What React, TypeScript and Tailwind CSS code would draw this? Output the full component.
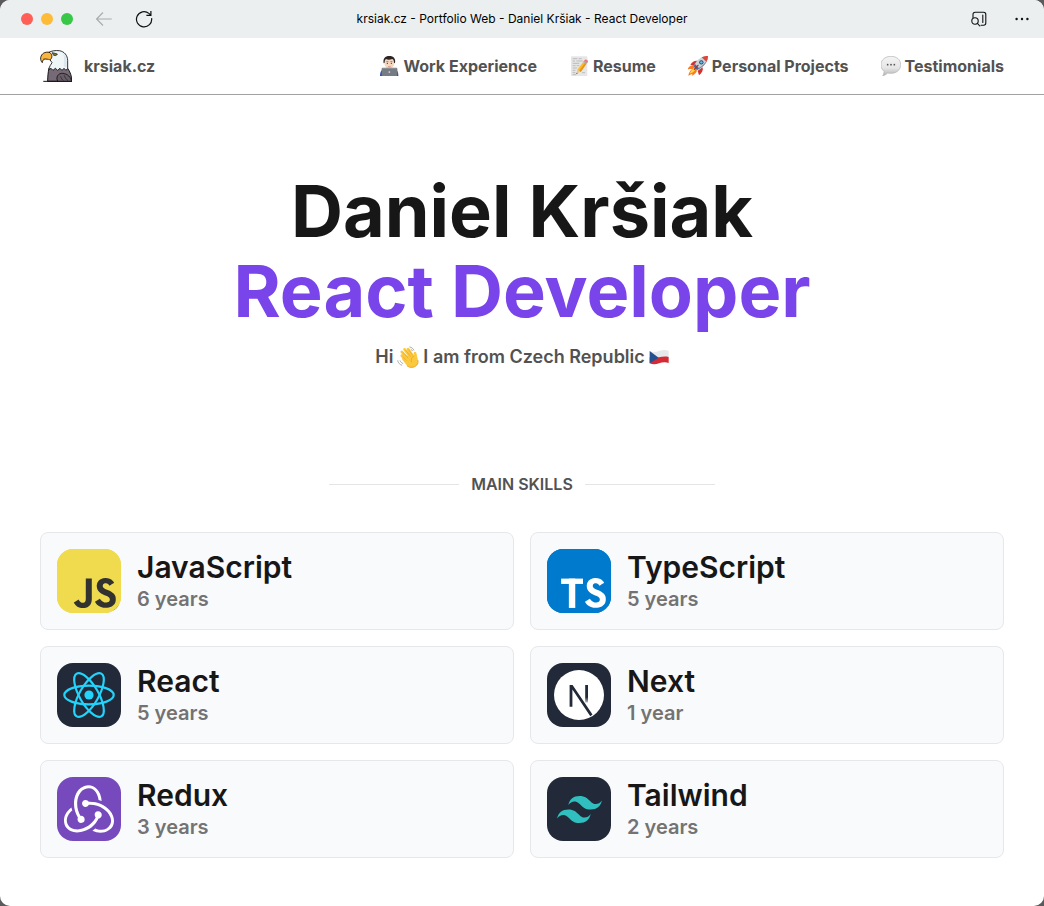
import type { ReactNode } from "react";
import { SiJavascript, SiRedux, SiTailwindcss } from "react-icons/si";

function BackIcon() {
  return (
    <svg width="16" height="16" viewBox="0 0 16 16" fill="none" stroke="#a9abac" strokeWidth="1.1" aria-hidden="true">
      <path d="M15.7 8H.8M7 1.5.6 8 7 14.5" />
    </svg>
  );
}

function ReloadIcon() {
  return (
    <svg width="18" height="18" viewBox="0 0 18 18" fill="none" stroke="#111" strokeWidth="1.2" aria-hidden="true">
      <path d="M16.6 8.2a7.6 7.6 0 1 1-2.7-4.8l1.6 1.5M15.9.9v4.5h-4.5" />
    </svg>
  );
}

function PageSearchIcon() {
  return (
    <svg width="16" height="16" viewBox="0 0 16 16" fill="none" stroke="#111" strokeWidth="1.1" strokeLinecap="round" aria-hidden="true">
      <path d="M2 6.4V3.4C2 2.1 2.9 1.2 4.2 1.2h8.4c1.3 0 2.2.9 2.2 2.2v8.6c0 1.3-.9 2.2-2.2 2.2H10M11.8 4v7.4" />
      <circle cx="4" cy="10" r="3.2" />
      <path d="m6.4 12.4 2.4 2.6" />
    </svg>
  );
}

function MoreIcon() {
  return (
    <svg width="14" height="4" viewBox="0 0 14 4" fill="#111" aria-hidden="true">
      <circle cx="1.6" cy="2" r="1.2" />
      <circle cx="7" cy="2" r="1.2" />
      <circle cx="12.4" cy="2" r="1.2" />
    </svg>
  );
}

function EagleLogo() {
  return (
    <svg width="32" height="32" viewBox="120 150 96 96" strokeLinejoin="round" strokeLinecap="round" aria-hidden="true">
      <path d="M147 205c-3 12-4 25-4 39h72c1-14-4-28-12-39z" fill="#756a75" stroke="#151515" strokeWidth="3" />
      <path
        d="M147 157c8-5 19-6 31-5 16 3 24 14 25 29l0 24-5 6-6-6-6 6-6-6-7 6-7-6-7 6-6-6-6 4c0-10 6-15 9-21l-7-10z"
        fill="#eff6f8"
        stroke="#151515"
        strokeWidth="2.6"
      />
      <path d="M188 159c9 6 11 14 12 25v18l-8-2c-2-14 4-28-4-41z" fill="#dbe7ec" />
      <path
        d="M148 157c-13-3-24 4-26 16-1 7 2 12 5 15 0-7 3-10 9-11l15 2c7-6 6-18-3-22z"
        fill="#f7b63e"
        stroke="#151515"
        strokeWidth="2.6"
      />
      <path d="m132 176 17 3" stroke="#b3691e" strokeWidth="3" fill="none" />
      <path d="m158 158 14 4c-1 5-9 7-13 2z" fill="#7d782b" stroke="#151515" strokeWidth="2" />
      <path d="M173 244c-7-13 2-25 15-24 15 1 25 12 27 24" fill="#675d68" stroke="#151515" strokeWidth="2.6" />
      <path d="M182 230c2 6 4 9 8 12m3-15c2 6 5 11 10 14" stroke="#151515" strokeWidth="1.6" fill="none" />
      <path d="M131 244h84" stroke="#151515" strokeWidth="3" />
    </svg>
  );
}

function TechnologistIcon() {
  return (
    <svg width="20" height="20" viewBox="120 168 60 60" aria-hidden="true">
      <path d="M123 228c0-14 6-21 18-23h20c12 2 17 9 17 23z" fill="#2f4da5" />
      <path d="M141 203h20l-10 12z" fill="#e9ecf2" />
      <path d="M144 196h14v9l-7 6-7-6z" fill="#e2b799" />
      <ellipse cx="151" cy="189" rx="15" ry="17" fill="#f5d7c0" />
      <path d="M134 190c-3-14 4-22 17-22s20 8 17 22l-3-2c0-6-2-9-5-11-7 3-15 3-19 0-3 3-4 6-4 11z" fill="#2d2524" />
      <circle cx="145" cy="190" r="1.8" fill="#3b2a26" />
      <circle cx="157" cy="190" r="1.8" fill="#3b2a26" />
      <path d="M142 185h6m6 0h6" stroke="#4a3430" strokeWidth="1.6" />
      <path d="M147 199c3 2 5 2 8 0" stroke="#b35e52" strokeWidth="1.6" fill="none" />
      <rect x="128" y="203" width="47" height="25" rx="3" fill="#777b83" />
      <rect x="130" y="204" width="43" height="2" rx="1" fill="#94989f" />
      <circle cx="151" cy="216" r="2.6" fill="#dcdfe4" />
    </svg>
  );
}

function MemoIcon() {
  return (
    <svg width="20" height="20" viewBox="690 168 60 60" aria-hidden="true">
      <rect x="696" y="169" width="49" height="59" rx="2" fill="#e6e6e6" />
      <path
        d="M701 176h14m4 0h9m-27 7h7m4 0h19m-30 7h20m-20 7h9m3 0h8m-20 7h13m-13 7h8m-8 7h8m-8 6h10m18-6h9"
        stroke="#b3b3b3"
        strokeWidth="2.5"
      />
      <path d="m712 223 3-14 8 6z" fill="#e9c79a" />
      <path d="m712 223 1-5 3 2z" fill="#333" />
      <path d="m715 209 18-24 9 7-17 24z" fill="#f9bd2b" />
      <path d="m721 212 17-24 4 4-17 24z" fill="#e4941e" />
      <path d="m733 185 2-3 10 6-3 4z" fill="#9ea4ab" />
      <path d="m735 182 3-3c4-1 9 2 9 6l-2 4z" fill="#e9787c" />
    </svg>
  );
}

function RocketIcon() {
  return (
    <svg width="20" height="20" viewBox="54 168 60 60" aria-hidden="true">
      <path d="M71 196c-10-1-17 6-18 13 5-3 9-2 14-2-7 5-11 12-12 20 4-3 8-4 12-6l-1 6c8-4 13-9 15-15z" fill="#fb7a22" />
      <path d="M72 203c-6 5-10 11-13 18 8-3 13-6 17-12z" fill="#ffd646" />
      <path d="M84 183c-9-2-17 2-23 11l13 3z" fill="#d3322f" />
      <path d="M98 202c2 9-2 17-11 24l-4-14z" fill="#d3322f" />
      <path d="M114 168c-18 0-33 9-43 31l10 11c21-8 32-23 33-42z" fill="#c9d1d9" />
      <path d="M114 168c-2 17-15 31-36 39l3 3c21-8 32-23 33-42z" fill="#7e8c9b" />
      <path d="M114 168c-7 0-13 1-19 4l14 13c3-5 5-11 5-17z" fill="#e0453a" />
      <path d="m71 199 4-7 12 13-6 5z" fill="#3d6da5" />
      <circle cx="94" cy="187" r="6.5" fill="#324c6d" />
      <circle cx="94" cy="187" r="3.6" fill="#6bbdec" />
      <path d="m73 208 11-12" stroke="#b22927" strokeWidth="4" strokeLinecap="round" />
    </svg>
  );
}

function SpeechIcon() {
  return (
    <svg width="20" height="20" viewBox="633 168 60 60" aria-hidden="true">
      <defs>
        <linearGradient id="bubble" x1="0" y1="0" x2="0" y2="1">
          <stop offset="0" stopColor="#f4f4f4" />
          <stop offset="0.6" stopColor="#e6e6e6" />
          <stop offset="1" stopColor="#b5b5b5" />
        </linearGradient>
      </defs>
      <path
        d="M663 169c17 0 29 10 29 25s-12 26-29 26c-4 0-7 0-10-1-4 4-9 7-15 8 3-4 4-8 4-13-6-5-9-12-9-20 0-15 13-25 30-25z"
        fill="url(#bubble)"
        stroke="#b2b2b2"
        strokeWidth="2"
      />
      <circle cx="653" cy="194" r="2.6" fill="#555" />
      <circle cx="663" cy="194" r="2.6" fill="#555" />
      <circle cx="673" cy="194" r="2.6" fill="#555" />
    </svg>
  );
}

function WaveIcon() {
  return (
    <svg width="22" height="22" viewBox="110 33 64 64" fill="none" strokeLinecap="round" aria-hidden="true">
      <path d="M147 36c6 1 10 4 12 9m-8-2c2 1 3 2 4 4M112 76c2 7 6 11 12 13m-5-13c2 4 4 6 8 8" stroke="#9b9b9b" strokeWidth="2.4" />
      <path d="M124 61 137 77M124 50l18 20M132 43l17 22M142 42l13 19" stroke="#fbc93d" strokeWidth="8" />
      <path
        d="M130 66 148 58l10 4c1-6-1-11 4-12 5 0 5 6 6 12 3 12 6 20-1 28-8 8-20 8-27 1l-14-17c-3-5 1-8 4-5z"
        fill="#fbc93d"
      />
      <path d="m128 52 14 16m-6-22 14 18m-5-19 10 15M128 65l9 10" stroke="#e49a25" strokeWidth="1.6" />
      <path d="M158 63c-6 4-8 9-6 16" stroke="#e49a25" strokeWidth="2" />
      <path d="M140 91c7 6 19 6 27-2 4-4 5-9 4-14" stroke="#e9a32a" strokeWidth="2.5" />
    </svg>
  );
}

function CzechFlagIcon() {
  return (
    <svg width="20" height="16" viewBox="868 42 60 48" aria-hidden="true">
      <path d="M870 48c10 4 19 3 28 0s19-5 29-1v20l-57 2z" fill="#e6e9ec" />
      <path d="M870 67c10 3 19 2 28 0s19-4 29-1v18c-10-4-20-2-29 1s-18 4-28 0z" fill="#d32a33" />
      <path d="m870 48 27 20-27 17z" fill="#25508f" />
    </svg>
  );
}

function JavaScriptLogo() {
  return (
    <svg width="64" height="64" viewBox="0 0 24 24">
      <rect x="5" y="9" width="18" height="14" fill="#323330" />
      <SiJavascript size={24} color="#f0db4f" />
    </svg>
  );
}

function TypeScriptLogo() {
  return (
    <svg width="64" height="64" viewBox="0 0 24 24">
      <rect x="13" y="9" width="10" height="14" fill="#fff" />
      <SiJavascript size={24} color="#007acc" />
      <rect x="4" y="9" width="9.8" height="14.5" fill="#007acc" />
      <rect x="5.3" y="11.1" width="8.2" height="2" fill="#fff" />
      <rect x="8.2" y="11.1" width="2.4" height="11" fill="#fff" />
    </svg>
  );
}

function ReactLogo() {
  return (
    <svg width="52" height="52" viewBox="-26 -26 52 52" fill="none" stroke="#22d3fb" strokeWidth="2.2">
      <circle r="4.6" fill="#22d3fb" stroke="none" />
      <ellipse rx="24.7" ry="9.4" />
      <ellipse rx="24.7" ry="9.4" transform="rotate(60)" />
      <ellipse rx="24.7" ry="9.4" transform="rotate(120)" />
    </svg>
  );
}

function NextLogo() {
  return (
    <svg width="64" height="64" viewBox="0 0 64 64">
      <defs>
        <linearGradient id="nextBar" x1="0" y1="0" x2="0" y2="1">
          <stop offset="0.7" stopColor="#222938" />
          <stop offset="1" stopColor="#222938" stopOpacity="0.3" />
        </linearGradient>
      </defs>
      <circle cx="32" cy="32" r="25" fill="#fff" />
      <path d="M22.6 22h3l19.9 29.6-2.2 1.7L25.4 26.6v17.1h-2.8z" fill="#222938" />
      <rect x="38.2" y="22" width="2.8" height="17.5" fill="url(#nextBar)" />
    </svg>
  );
}

const navItems: { label: string; icon: ReactNode }[] = [
  { label: "Work Experience", icon: <TechnologistIcon /> },
  { label: "Resume", icon: <MemoIcon /> },
  { label: "Personal Projects", icon: <RocketIcon /> },
  { label: "Testimonials", icon: <SpeechIcon /> },
];

const skills: { name: string; time: string; tile: string; logo: ReactNode }[] = [
  { name: "JavaScript", time: "6 years", tile: "bg-[#f0db4f]", logo: <JavaScriptLogo /> },
  { name: "TypeScript", time: "5 years", tile: "bg-[#007acc]", logo: <TypeScriptLogo /> },
  { name: "React", time: "5 years", tile: "bg-[#222938]", logo: <ReactLogo /> },
  { name: "Next", time: "1 year", tile: "bg-[#222938]", logo: <NextLogo /> },
  { name: "Redux", time: "3 years", tile: "bg-[#764abc]", logo: <SiRedux size={50} color="#fff" /> },
  { name: "Tailwind", time: "2 years", tile: "bg-[#222938]", logo: <SiTailwindcss size={45} color="#31bebf" /> },
];

function TitleBar() {
  return (
    <div className="grid h-[38px] grid-cols-[1fr_auto_1fr] items-center bg-[#ebeff0] px-[15px]">
      <div className="flex items-center pl-1.5">
        <div className="flex gap-2">
          <button aria-label="Close" className="size-3 rounded-full bg-[#ff5f57]" />
          <button aria-label="Minimize" className="size-3 rounded-full bg-[#febb38]" />
          <button aria-label="Zoom" className="size-3 rounded-full bg-[#36c846]" />
        </div>
        <button aria-label="Back" className="ml-[23px]">
          <BackIcon />
        </button>
        <button aria-label="Reload" className="ml-[23px]">
          <ReloadIcon />
        </button>
      </div>
      <p className="text-xs text-black">krsiak.cz - Portfolio Web - Daniel Kršiak - React Developer</p>
      <div className="flex items-center justify-end gap-7">
        <button aria-label="Search in page">
          <PageSearchIcon />
        </button>
        <button aria-label="More">
          <MoreIcon />
        </button>
      </div>
    </div>
  );
}

export default function App() {
  return (
    <div className="min-h-screen bg-[#5a5a5c] font-['Inter',sans-serif]">
      <div className="min-h-screen overflow-hidden rounded-[10px] bg-white">
        <TitleBar />
        <header className="flex h-[57px] items-center justify-between border-b border-neutral-400 px-10 font-bold text-neutral-600">
          <a href="#home" className="flex items-center gap-3">
            <EagleLogo />
            krsiak.cz
          </a>
          <nav className="flex gap-8">
            {navItems.map((item) => (
              <a key={item.label} href="#" className="flex items-center gap-1">
                {item.icon}
                {item.label}
              </a>
            ))}
          </nav>
        </header>
        <main className="px-10 pt-[76px] pb-12">
          <h1 className="text-center text-[72px] leading-[80px] font-bold text-neutral-900">
            <span className="block">Daniel Kršiak</span>
            <span className="block text-[#7944ea]">React Developer</span>
          </h1>
          <p className="mt-3 flex items-center justify-center gap-1 text-lg font-semibold text-neutral-600">
            Hi <WaveIcon /> I am from Czech Republic <CzechFlagIcon />
          </p>
          <div className="mt-[101px] flex items-center justify-center gap-3">
            <span className="h-px w-[130px] bg-neutral-200" />
            <h2 className="font-semibold text-neutral-600">MAIN SKILLS</h2>
            <span className="h-px w-[130px] bg-neutral-200" />
          </div>
          <ul className="mt-9 grid grid-cols-2 gap-4">
            {skills.map((skill) => (
              <li key={skill.name} className="flex items-center gap-4 rounded-lg border border-gray-200 bg-gray-50 p-4">
                <div className={`flex size-16 items-center justify-center overflow-hidden rounded-2xl ${skill.tile}`}>{skill.logo}</div>
                <div>
                  <h3 className="text-3xl font-semibold text-neutral-900">{skill.name}</h3>
                  <p className="text-xl font-semibold text-neutral-500">{skill.time}</p>
                </div>
              </li>
            ))}
          </ul>
        </main>
      </div>
    </div>
  );
}
